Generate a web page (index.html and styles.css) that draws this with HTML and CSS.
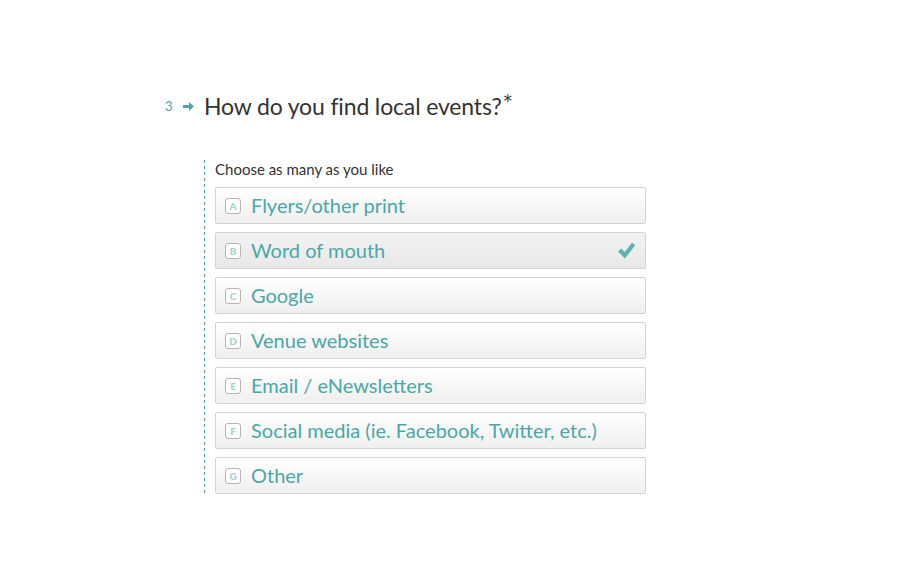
FILE: index.html
```html
<!DOCTYPE html>
<html>
<head>
<meta charset="utf-8">
<link rel="stylesheet" href="styles.css">
</head>
<body>
<div class="question">
  <div class="q-head">
    <span class="q-num">3</span>
    <svg class="q-arrow" width="11" height="9" viewBox="0 0 11 9"><path d="M0 3h6V0l5 4.5L6 9V6H0z" fill="#4aa8a6"/></svg>
    <h1 class="q-title">How do you find local events?<sup class="req">*</sup></h1>
  </div>
  <div class="q-body">
    <div class="hint">Choose as many as you like</div>
    <ul class="choices">
      <li class="choice"><span class="key">A</span><span class="label">Flyers/other print</span></li>
      <li class="choice selected"><span class="key">B</span><span class="label">Word of mouth</span>
        <svg class="check" width="19" height="19" viewBox="0 0 19 19"><path d="M1 10.5l3.2-3 3.6 3.6L15 1.5l3.3 2.8L8 17.5z" fill="#5fb3b1"/></svg>
      </li>
      <li class="choice"><span class="key">C</span><span class="label">Google</span></li>
      <li class="choice"><span class="key">D</span><span class="label">Venue websites</span></li>
      <li class="choice"><span class="key">E</span><span class="label">Email / eNewsletters</span></li>
      <li class="choice"><span class="key">F</span><span class="label">Social media (ie. Facebook, Twitter, etc.)</span></li>
      <li class="choice"><span class="key">G</span><span class="label">Other</span></li>
    </ul>
  </div>
</div>
</body>
</html>
```
FILE: styles.css
```css
html, body {
  margin: 0;
  padding: 0;
  background: #fff;
  font-family: "Lato", "Open Sans", sans-serif;
}
.question {
  padding-top: 88px;
  padding-left: 165px;
}
.q-head {
  display: flex;
  align-items: center;
  height: 36px;
}
.q-num {
  color: #4aa8a6;
  font-size: 13px;
  width: 18px;
}
.q-arrow {
  margin-right: 10px;
}
.q-title {
  margin: 0;
  font-weight: 400;
  font-size: 23px;
  color: #333;
  letter-spacing: -0.15px;
}
.req {
  font-family: "DejaVu Sans", sans-serif;
  font-size: 17px;
  color: #333;
  vertical-align: 0;
  position: relative;
  top: -8px;
  margin-left: 2px;
}
.q-body {
  margin-top: 36px;
  margin-left: 39px;
  background-image: repeating-linear-gradient(to bottom, #4aa8a6 0 3px, transparent 3px 6px);
  background-size: 1px 100%;
  background-repeat: no-repeat;
  background-position: left top;
  padding-left: 11px;
  width: 442px;
}
.hint {
  font-size: 15px;
  color: #333;
  height: 22px;
  line-height: 18px;
  margin-bottom: 5px;
}
.choices {
  list-style: none;
  margin: 0;
  padding: 0;
  display: flex;
  flex-direction: column;
  gap: 9px;
}
.choice {
  box-sizing: border-box;
  height: 37px;
  width: 431px;
  border: 1px solid #d3d3d3;
  border-radius: 2px;
  background: linear-gradient(#ffffff, #efefef);
  display: flex;
  align-items: center;
  padding-left: 9px;
  padding-right: 9px;
  padding-bottom: 1px;
}
.choice + .choice {
  margin-top: -1px;
}
.choice.selected {
  background: linear-gradient(#f2f2f2, #e8e8e8);
}
.key {
  box-sizing: border-box;
  width: 16px;
  height: 16px;
  border: 1px solid #b5b5b5;
  border-radius: 3px;
  font-size: 10px;
  line-height: 14px;
  text-align: center;
  color: #a3d3d1;
  font-weight: 900;
  background: #fff;
  margin-right: 10px;
  margin-top: 1px;
}
.label {
  color: #4aa8a6;
  font-size: 20px;
  line-height: 22px;
  flex: 1;
}
.check {
  margin-top: 1px;
}
```
